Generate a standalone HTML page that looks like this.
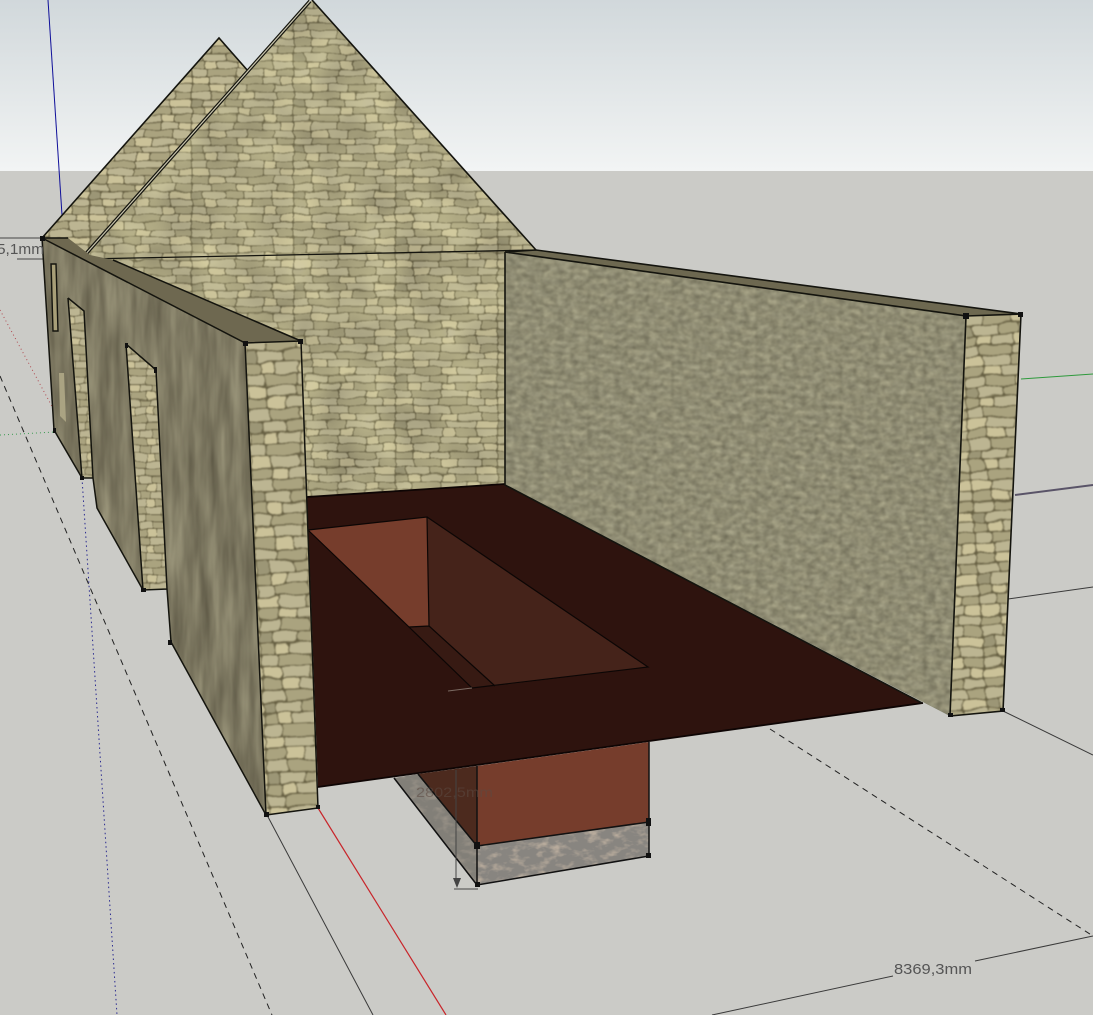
<!DOCTYPE html>
<html><head><meta charset="utf-8"><style>
html,body{margin:0;padding:0;background:#cbcbc7}
svg{display:block}
text{font-family:"Liberation Sans",sans-serif}
</style></head><body>
<svg width="1093" height="1015" viewBox="0 0 1093 1015" xmlns="http://www.w3.org/2000/svg">
<defs>
<linearGradient id="sky" x1="0" y1="0" x2="0" y2="1"><stop offset="0" stop-color="#d1d8db"/><stop offset="1" stop-color="#f2f4f4"/></linearGradient>
<g id="tile">
<rect width="120" height="54" fill="#665f42"/>
<g fill="#bcb592">
<rect x="0" y="0.5" width="22" height="8" rx="2"/><rect x="73" y="0.5" width="27" height="8" rx="2"/><rect x="13" y="9.5" width="26" height="8" rx="2"/><rect x="61" y="9.5" width="33" height="8" rx="2"/><rect x="30" y="18.5" width="24" height="8" rx="2"/><rect x="96" y="18.5" width="23" height="8" rx="2"/><rect x="0" y="27.5" width="17" height="8" rx="2"/><rect x="53" y="27.5" width="31" height="8" rx="2"/><rect x="21" y="36.5" width="29" height="8" rx="2"/><rect x="84" y="36.5" width="20" height="8" rx="2"/><rect x="40" y="45.5" width="24" height="8" rx="2"/><rect x="97" y="45.5" width="22" height="8" rx="2"/>
</g>
<g fill="#aaa37f">
<rect x="23" y="0.5" width="30" height="8" rx="2"/><rect x="101" y="0.5" width="18" height="8" rx="2"/><rect x="40" y="9.5" width="20" height="8" rx="2"/><rect x="0" y="18.5" width="14" height="8" rx="2"/><rect x="70" y="18.5" width="25" height="8" rx="2"/><rect x="18" y="27.5" width="34" height="8" rx="2"/><rect x="100" y="27.5" width="19" height="8" rx="2"/><rect x="51" y="36.5" width="32" height="8" rx="2"/><rect x="0" y="45.5" width="20" height="8" rx="2"/><rect x="65" y="45.5" width="31" height="8" rx="2"/>
</g>
<g fill="#cbc299">
<rect x="54" y="0.5" width="18" height="8" rx="2"/><rect x="95" y="9.5" width="24" height="8" rx="2"/><rect x="15" y="18.5" width="14" height="8" rx="2"/><rect x="55" y="18.5" width="14" height="8" rx="2"/><rect x="85" y="27.5" width="14" height="8" rx="2"/><rect x="0" y="36.5" width="20" height="8" rx="2"/><rect x="105" y="36.5" width="14" height="8" rx="2"/><rect x="21" y="45.5" width="18" height="8" rx="2"/>
</g>
<rect x="0" y="9.5" width="12" height="8" rx="2" fill="#9c9676"/>
</g>
<pattern id="st1" width="120" height="54" patternUnits="userSpaceOnUse" patternTransform="translate(90 0) scale(.85)"><use href="#tile"/></pattern>
<pattern id="st2" width="120" height="54" patternUnits="userSpaceOnUse" patternTransform="translate(505 252) skewY(7) scale(.7,.75)"><use href="#tile"/></pattern>
<pattern id="st3" width="120" height="54" patternUnits="userSpaceOnUse" patternTransform="translate(245 340) rotate(-3) scale(.95,1.3)"><use href="#tile"/></pattern>
<pattern id="st4" width="120" height="54" patternUnits="userSpaceOnUse" patternTransform="translate(960 316) rotate(-4) scale(.95,1.15)"><use href="#tile"/></pattern>
<pattern id="st5" width="120" height="54" patternUnits="userSpaceOnUse" patternTransform="translate(60 300) scale(.5,.85)"><use href="#tile"/></pattern>
<filter id="stone" x="0" y="0" width="1" height="1" color-interpolation-filters="sRGB">
<feTurbulence type="fractalNoise" baseFrequency=".05 .12" numOctaves="2" seed="3" result="n"/>
<feDisplacementMap in="SourceGraphic" in2="n" scale="5" xChannelSelector="R" yChannelSelector="G"/>
<feGaussianBlur stdDeviation=".6"/>
<feComposite in2="SourceGraphic" operator="in"/>
</filter>
<filter id="stone2" x="0" y="0" width="1" height="1" color-interpolation-filters="sRGB">
<feTurbulence type="fractalNoise" baseFrequency=".04 .09" numOctaves="2" seed="7" result="n"/>
<feDisplacementMap in="SourceGraphic" in2="n" scale="7" xChannelSelector="R" yChannelSelector="G"/>
<feGaussianBlur stdDeviation=".7"/>
<feComposite in2="SourceGraphic" operator="in"/>
</filter>
<filter id="soft" x="0" y="0" width="1" height="1" color-interpolation-filters="sRGB">
<feGaussianBlur stdDeviation="1.3"/>
<feComposite in2="SourceGraphic" operator="in"/>
</filter>
<filter id="mottle" x="0" y="0" width="1" height="1" color-interpolation-filters="sRGB">
<feTurbulence type="fractalNoise" baseFrequency=".025" numOctaves="2" seed="12"/>
<feColorMatrix values="1.5 0 0 0 -.1  1.5 0 0 0 -.1  1.1 0 0 0 -.05  0 0 0 0 1"/>
<feComposite in2="SourceGraphic" operator="in"/>
</filter>
<filter id="rwall" x="0" y="0" width="1" height="1" color-interpolation-filters="sRGB">
<feTurbulence type="fractalNoise" baseFrequency=".14 .2" numOctaves="3" seed="5"/>
<feGaussianBlur stdDeviation=".7"/>
<feColorMatrix values=".35 0 0 0 .34  .35 0 0 0 .335  .3 0 0 0 .28  0 0 0 0 1"/>
<feComposite in2="SourceGraphic" operator="in"/>
</filter>
<filter id="lwall" x="0" y="0" width="1" height="1" color-interpolation-filters="sRGB">
<feTurbulence type="fractalNoise" baseFrequency=".09 .012" numOctaves="3" seed="8"/>
<feColorMatrix values=".3 0 0 0 .34  .3 0 0 0 .32  .26 0 0 0 .25  0 0 0 0 1"/>
<feComposite in2="SourceGraphic" operator="in"/>
</filter>
<filter id="granite" x="0" y="0" width="1" height="1" color-interpolation-filters="sRGB">
<feTurbulence type="fractalNoise" baseFrequency=".08 .14" numOctaves="3" seed="9"/>
<feColorMatrix values="0 0 0 0 .72  0 0 0 0 .67  0 0 0 0 .61  3 0 0 0 -1.4"/>
<feComposite in2="SourceGraphic" operator="in"/>
</filter>
</defs>

<rect width="1093" height="171" fill="url(#sky)"/>
<rect y="171" width="1093" height="844" fill="#cbcbc7"/>

<!-- axes and guides -->
<g fill="none">
<path d="M48 0L62 215" stroke="#10109a" stroke-width="1"/>
<path d="M318 808L446 1015" stroke="#c8252a" stroke-width="1.2"/>
<path d="M0 310L55 412" stroke="#b04a50" stroke-width="1" stroke-dasharray="1 3"/>
<path d="M1021 379L1093 374" stroke="#2e9a3c" stroke-width="1"/>
<path d="M1015 495L1093 485" stroke="#5a5468" stroke-width="2"/>
<path d="M0 435L55 432" stroke="#3a9a50" stroke-width="1" stroke-dasharray="1 3"/>
<path d="M82 478L117 1015" stroke="#2a2a90" stroke-width="1" stroke-dasharray="1.5 3"/>
<path d="M0 376L272 1015" stroke="#222" stroke-width="1" stroke-dasharray="6 5"/>
<path d="M770 729L1093 936" stroke="#222" stroke-width="1" stroke-dasharray="6 5"/>
<path d="M1008 599L1093 587M1003 711L1093 755M267 815L373 1015M712 1015L893 976M975 961L1093 936" stroke="#3a3a3a" stroke-width="1"/>
<path d="M0 238H44M17 259H85" stroke="#444" stroke-width="1"/>
</g>

<!-- rear gable -->
<polygon points="42,238 219,38 250,72 90,255" fill="#aaa37f"/>
<polygon points="42,238 219,38 250,72 90,255" fill="url(#st1)" filter="url(#stone)"/>
<path d="M42 238L219 38L248 71" fill="none" stroke="#14140e" stroke-width="1.6"/>
<!-- front gable + back wall -->
<polygon points="85,258 312,0 536,250 505,252 505,486 300,498 110,300" fill="#aaa37f"/>
<polygon points="85,258 312,0 536,250 505,252 505,486 300,498 110,300" fill="url(#st1)" filter="url(#stone)"/>
<polygon points="85,258 312,0 536,250 505,252 505,486 300,498 110,300" filter="url(#mottle)" opacity=".14"/>
<path d="M84 256L310 1" fill="none" stroke="#14140e" stroke-width="3.6"/>
<path d="M84 256L310 1" fill="none" stroke="#c9c5ae" stroke-width="1.2"/>
<path d="M312 0L536 250" fill="none" stroke="#14140e" stroke-width="1.6"/>
<path d="M85 259L536 250" stroke="#15150f" stroke-width="1.3"/>

<!-- floor -->
<polygon points="307,497 505,484 923,703 318,787" fill="#2e130e"/>
<path d="M307 497L505 484M318 787L923 703" stroke="#0e0504" stroke-width="1.8" fill="none"/>
<!-- pit -->
<polygon points="308,530 427,517 429,626 409,627" fill="#763d2c"/>
<polygon points="427,517 648,667 495,686 429,626" fill="#45231a"/>
<polygon points="409,627 429,626 495,686 472,688" fill="#371a13"/>
<path d="M308 530L427 517L429 626L495 686M409 627L429 626M427 517L648 667L472 688L409 627L308 530" stroke="#0c0605" stroke-width="1.2" fill="none"/>
<path d="M448 691L472 688" stroke="#7a6a62" stroke-width="1"/>

<!-- under block -->
<polygon points="394,778 418,774 477,846 477,885" fill="#827f78"/>
<polygon points="394,778 418,774 477,846 477,885" filter="url(#granite)" opacity=".4"/>
<polygon points="418,774 477,766 477,846" fill="#4c2a1e"/>
<polygon points="477,766 649,742 649,822 477,846" fill="#763d2c"/>
<polygon points="477,846 649,822 649,856 477,885" fill="#888580"/>
<polygon points="477,846 649,822 649,856 477,885" filter="url(#granite)"/>
<path d="M477 766V885L649 856V742M477 846L649 822M394 778L477 885M418 774L477 846" stroke="#111" stroke-width="1.5" fill="none"/>
<g fill="#111"><rect x="474" y="842" width="6" height="7"/><rect x="646" y="818" width="5" height="8"/><rect x="646" y="853" width="5" height="5"/><rect x="475" y="882" width="5" height="5"/></g>
<path d="M456 770V882M454 889H478" stroke="#444" stroke-width="1" fill="none"/>
<polygon points="453,878 461,878 457,888" fill="#444"/>
<text x="416" y="797" font-size="14" textLength="77" lengthAdjust="spacingAndGlyphs" fill="#5c4a42" opacity=".55">2802,5mm</text>

<!-- right wall -->
<polygon points="505,252 966,316 950,716 505,485" fill="#84836a"/>
<polygon points="505,252 966,316 950,716 505,485" filter="url(#rwall)"/>
<polygon points="505,252 966,316 950,716 505,485" fill="url(#st2)" filter="url(#soft)" opacity=".3"/>
<polygon points="505,252 536,250 1021,314 966,316" fill="#6d6850"/>
<polygon points="966,316 1021,314 1003,711 950,716" fill="#b5ae8b"/>
<polygon points="966,316 1021,314 1003,711 950,716" fill="url(#st4)" filter="url(#stone2)"/>
<path d="M505 252L966 316L950 716L1003 711L1021 314L966 316M505 252L536 250L1021 314M505 252V485L922 703" stroke="#14140e" stroke-width="1.6" fill="none"/>
<g fill="#111"><rect x="963" y="313" width="6" height="6"/><rect x="1018" y="312" width="5" height="5"/><rect x="948" y="713" width="5" height="4"/><rect x="1000" y="708" width="5" height="4"/></g>

<!-- left wall: door reveals -->
<polygon points="68,298 84,311 93,478 82,478" fill="#ada987"/>
<polygon points="68,298 84,311 93,478 82,478" fill="url(#st5)" filter="url(#stone)"/>
<polygon points="126,344 156,370 167,589 143,590" fill="#ada987"/>
<polygon points="126,344 156,370 167,589 143,590" fill="url(#st5)" filter="url(#stone)"/>
<!-- left wall -->
<polygon points="42,238 245,343 266,815 171,642 167,589 156,370 126,344 143,590 97,508 93,478 84,311 68,298 82,478 54,430" filter="url(#lwall)"/>
<polygon points="52,264 56,264 58,331 53,331" fill="#a89f78"/>
<polygon points="59,373 64,373 66,422 60,416" fill="#aaa382"/>
<polygon points="42,238 68,238 90,255 113,260 301,341 245,343" fill="#6e6850"/>
<polygon points="245,343 301,341 318,808 266,815" fill="#b5ae8b"/>
<polygon points="245,343 301,341 318,808 266,815" fill="url(#st3)" filter="url(#stone2)"/>
<path d="M42 238L245 343L266 815L318 808L301 341L245 343M113 260L301 341M42 238L68 238M42 238L54 430L82 478M93 478L97 508L143 590M171 642L266 815M68 298L82 478L93 478L84 311L68 298M126 344L143 590L167 589L156 370L126 344M167 589L171 642" stroke="#14140e" stroke-width="1.5" fill="none"/>
<path d="M51 264L56 264L58 331L53 331Z" stroke="#14140e" stroke-width="1.4" fill="none"/>
<g fill="#111"><rect x="40" y="236" width="5" height="5"/><rect x="243" y="341" width="5" height="5"/><rect x="298" y="339" width="5" height="5"/><rect x="264" y="812" width="5" height="5"/><rect x="316" y="805" width="4" height="4"/><rect x="80" y="476" width="4" height="4"/><rect x="141" y="588" width="5" height="4"/><rect x="168" y="640" width="4" height="5"/><rect x="53" y="428" width="3" height="5"/><rect x="125" y="343" width="3" height="5"/><rect x="154" y="367" width="3" height="6"/></g>

<text x="-3" y="254" font-size="15" textLength="47" lengthAdjust="spacingAndGlyphs" fill="#555">5,1mm</text>
<text x="894" y="974" font-size="15" textLength="78" lengthAdjust="spacingAndGlyphs" fill="#555">8369,3mm</text>
</svg>
</body></html>
